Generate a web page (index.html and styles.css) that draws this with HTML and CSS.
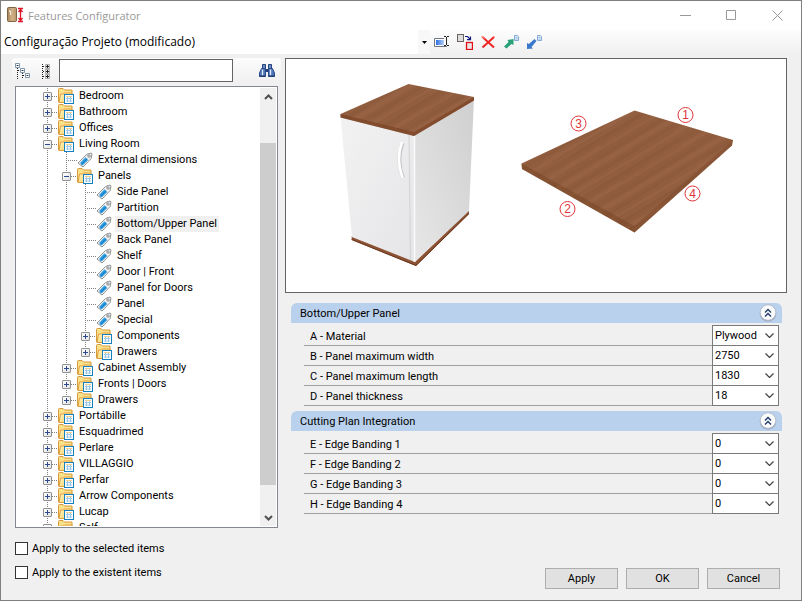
FILE: index.html
```html
<!DOCTYPE html>
<html lang="en">
<head>
<meta charset="utf-8">
<title>Features Configurator</title>
<link rel="stylesheet" href="styles.css">
</head>
<body>
<svg class="defs" aria-hidden="true">
  <defs>
    <linearGradient id="blueFill" x1="0" x2="1"><stop offset="0" stop-color="#2f6fe0"/><stop offset="1" stop-color="#b5d0fa"/></linearGradient>
    <linearGradient id="doorFill" x1="0" x2="1"><stop offset="0" stop-color="#a98258"/><stop offset=".5" stop-color="#d2b48a"/><stop offset="1" stop-color="#b89468"/></linearGradient>
    <linearGradient id="folderFill" x1="0" y1="0" x2="1" y2="1"><stop offset="0" stop-color="#fff3bd"/><stop offset="1" stop-color="#fbd067"/></linearGradient>
    <symbol id="folder" viewBox="0 0 16 16">
      <path d="M.5 14V1.500Q.5.5 1.500.5H5l1.500 1.500h7.500v9H8z" fill="#fbe08c" stroke="#d69a3a"/>
      <path d="M1 14.500l1.500-8.500H5.500l1-1H14V13H7l-1 1.500z" fill="url(#folderFill)" stroke="#dda03e"/>
      <rect x="6.500" y="6.500" width="9" height="9" fill="#fff" stroke="#1480bd"/>
      <path d="M9.500 8v6M12.500 8v6M8 10.500h6M8 13h6" stroke="#9cc6e6" fill="none"/>
      <path d="M8 8.500h6" stroke="#f3cf94"/>
    </symbol>
    <symbol id="tag" viewBox="0 0 16 16">
      <path d="M1 11L9.500 2.500l4.500-1.500 1 .8-.8 4.700L6 15z" fill="#f0f1f2" stroke="#909295" stroke-linejoin="round"/>
      <path d="M3 11L8.500 5.200l2.700 2.800L5.500 13.500z" fill="#2d9be0"/>
      <path d="M4.500 12.500L10 6.800" stroke="#1778b8"/>
      <circle cx="12" cy="4" r="1.200" fill="#fff" stroke="#858585"/>
    </symbol>
    <symbol id="caret" viewBox="0 0 9 5"><path d="M.5.5l4 4 4-4" fill="none" stroke="#444" stroke-width="1.200"/></symbol>
    <symbol id="collapse" viewBox="0 0 18 18">
      <circle cx="9" cy="9.500" r="8.300" fill="#9dabc0"/>
      <circle cx="9" cy="8.500" r="7.800" fill="#fbfbfc" stroke="#b2bccb"/>
      <path d="M6 8.500l3-3 3 3M6 12.500l3-3 3 3" fill="none" stroke="#1f3a66" stroke-width="1.400"/>
    </symbol>
  </defs>
</svg>

<div class="window">
  <header class="titlebar">
    <svg class="app-icon" viewBox="0 0 17 17" aria-hidden="true">
      <rect x=".5" y=".5" width="9" height="14" rx="1" fill="url(#doorFill)" stroke="#806344"/>
      <path d="M3.500 4v4" stroke="#f5efe6"/><path d="M2 3h1v2H2z" fill="#ddd"/>
      <path d="M11 1.500h5M11 14.500h5M13.500 3v10M11.500 5l2-2.500 2 2.500M11.500 11l2 2.500 2-2.500" fill="none" stroke="#dc1428" stroke-width="1.300"/>
    </svg>
    <h1>Features Configurator</h1>
    <div class="window-controls">
      <button aria-label="Minimize"><svg viewBox="0 0 11 11"><path d="M0 5.500h11"/></svg></button>
      <button aria-label="Maximize"><svg viewBox="0 0 11 11"><path d="M.5.5h9v9h-9z"/></svg></button>
      <button aria-label="Close"><svg viewBox="0 0 11 11"><path d="M.5.5l10 10M10.500.5l-10 10"/></svg></button>
    </div>
  </header>

  <div class="toolbar">
    <div class="profile">
      <select aria-label="Configuration"><option>Configuração Projeto (modificado)</option></select>
      <span class="profile-arrow"><svg viewBox="0 0 5 3"><path d="M0 0h5L2.500 3z"/></svg></span>
    </div>
    <div class="actions">
      <button aria-label="Rename"><svg viewBox="0 0 16 16">
        <path d="M10 4.500H.5v8H13" fill="#fff" stroke="#6e7683"/><rect x="2" y="6" width="8" height="5" fill="url(#blueFill)"/>
        <path d="M10 2.500h2M13 2.500h2M12.500 3v8M10 11.500h2M13 11.500h2" fill="none" stroke="#222"/>
      </svg></button>
      <button aria-label="Replace"><svg viewBox="0 0 16 16">
        <rect x=".5" y=".5" width="6" height="7" fill="#ddd" stroke="#6b6262"/><rect x="9.500" y="8.500" width="6" height="7" fill="#ebe6e6" stroke="#e00d14" stroke-width="1.300"/>
        <path d="M8 2.500h2.500L13 5M13.500 2.500v3.200h-3.500" fill="none" stroke="#101c7c" stroke-width="1.200"/>
      </svg></button>
      <button aria-label="Delete"><svg viewBox="0 0 16 16"><path d="M2.500 3L14 13.500M14 3L2.500 13.500" fill="none" stroke="#ef2424" stroke-width="2"/><path d="M1.500 2.500l3 2M14 3l.5-.5" stroke="#f77" stroke-width="1.500"/></svg></button>
      <button aria-label="Export"><svg viewBox="0 0 16 16">
        <path d="M1 12.500l4.500-4.500-1-2L10.500 5v6l-2-1-5 4.500z" fill="#28a078"/>
        <path d="M11.500 1.500h3l1 1v4h-4z" fill="#dcebfa" stroke="#83a9d6"/><path d="M12.500 3.500h2M12.500 5h2" stroke="#8db1dc" stroke-width=".7"/>
      </svg></button>
      <button aria-label="Import"><svg viewBox="0 0 16 16">
        <path d="M1 15V9l1.800 1L8.500 5l2 2-5 6 1.500 1.500z" fill="#3b78cc"/>
        <path d="M11.500 1.500h3l1 1v4h-4z" fill="#dcebfa" stroke="#83a9d6"/><path d="M12.500 3.500h2M12.500 5h2" stroke="#8db1dc" stroke-width=".7"/>
      </svg></button>
    </div>
  </div>

  <main class="content">
    <aside class="sidebar">
      <div class="searchbar">
        <button aria-label="Collapse all"><svg viewBox="0 0 16 16">
          <path d="M2.500 5v11M7.500 10v6M3 7.500h3M8 12.500h3" fill="none" stroke="#222" stroke-dasharray="1 1"/>
          <path d="M.5.500h4v4h-4zM5.500 5.500h4v4h-4zM10.500 10.500h4v4h-4z" fill="#fff" stroke="#8095a8"/>
          <path d="M1.500 2.500h2M6.500 7.500h2M11.500 12.500h2" stroke="#23405c"/>
        </svg></button>
        <button aria-label="Expand all"><svg viewBox="0 0 16 16">
          <path d="M3.500 1v15M4 3.500h2M4 8.500h2M4 13.500h2" fill="none" stroke="#222" stroke-dasharray="1 1"/>
          <path d="M6.500 1.500h4v4h-4zM6.500 6.500h4v4h-4zM6.500 11.500h4v4h-4z" fill="#eee" stroke="#aaa"/>
          <path d="M7 3.500h3M7 8.500h3M7 13.500h3M8.500 2v3M8.500 7v3M8.500 12v3" stroke="#222"/>
        </svg></button>
        <input type="text" aria-label="Search features">
        <button class="find" aria-label="Find"><svg viewBox="0 0 16 16">
          <path d="M3.500 1.500h3v4h-3zM9.500 1.500h3v4h-3z" fill="#6d8fc4" stroke="#24427d"/>
          <path d="M2.500 5.500h4V13.500h-6V10zM9.500 5.500h4l2 4.500v3.500h-6z" fill="#5078b8" stroke="#2c4c8a"/>
          <path d="M6.500 6h3v3h-3z" fill="#24427d"/><path d="M3.500 6.500v6M11.500 6.500v6" stroke="#e1ebfa" stroke-width="1.300"/><path d="M.5 13h6M9.500 13h6" stroke="#18305f"/>
        </svg></button>
      </div>

      <div class="tree-box">
        <div class="tree-view">
          <ul class="tree">
            <li><div class="row"><button class="twist" aria-label="Expand"></button><svg><use href="#folder"/></svg><span>Bedroom</span></div></li>
            <li><div class="row"><button class="twist" aria-label="Expand"></button><svg><use href="#folder"/></svg><span>Bathroom</span></div></li>
            <li><div class="row"><button class="twist" aria-label="Expand"></button><svg><use href="#folder"/></svg><span>Offices</span></div></li>
            <li><div class="row"><button class="twist open" aria-label="Collapse"></button><svg><use href="#folder"/></svg><span>Living Room</span></div>
              <ul>
                <li><div class="row leaf"><svg><use href="#tag"/></svg><span>External dimensions</span></div></li>
                <li><div class="row"><button class="twist open" aria-label="Collapse"></button><svg><use href="#folder"/></svg><span>Panels</span></div>
                  <ul>
                    <li><div class="row leaf"><svg><use href="#tag"/></svg><span>Side Panel</span></div></li>
                    <li><div class="row leaf"><svg><use href="#tag"/></svg><span>Partition</span></div></li>
                    <li><div class="row leaf"><svg><use href="#tag"/></svg><span class="selected">Bottom/Upper Panel</span></div></li>
                    <li><div class="row leaf"><svg><use href="#tag"/></svg><span>Back Panel</span></div></li>
                    <li><div class="row leaf"><svg><use href="#tag"/></svg><span>Shelf</span></div></li>
                    <li><div class="row leaf"><svg><use href="#tag"/></svg><span>Door | Front</span></div></li>
                    <li><div class="row leaf"><svg><use href="#tag"/></svg><span>Panel for Doors</span></div></li>
                    <li><div class="row leaf"><svg><use href="#tag"/></svg><span>Panel</span></div></li>
                    <li><div class="row leaf"><svg><use href="#tag"/></svg><span>Special</span></div></li>
                    <li><div class="row"><button class="twist" aria-label="Expand"></button><svg><use href="#folder"/></svg><span>Components</span></div></li>
                    <li><div class="row"><button class="twist" aria-label="Expand"></button><svg><use href="#folder"/></svg><span>Drawers</span></div></li>
                  </ul>
                </li>
                <li><div class="row"><button class="twist" aria-label="Expand"></button><svg><use href="#folder"/></svg><span>Cabinet Assembly</span></div></li>
                <li><div class="row"><button class="twist" aria-label="Expand"></button><svg><use href="#folder"/></svg><span>Fronts | Doors</span></div></li>
                <li><div class="row"><button class="twist" aria-label="Expand"></button><svg><use href="#folder"/></svg><span>Drawers</span></div></li>
              </ul>
            </li>
            <li><div class="row"><button class="twist" aria-label="Expand"></button><svg><use href="#folder"/></svg><span>Portábille</span></div></li>
            <li><div class="row"><button class="twist" aria-label="Expand"></button><svg><use href="#folder"/></svg><span>Esquadrimed</span></div></li>
            <li><div class="row"><button class="twist" aria-label="Expand"></button><svg><use href="#folder"/></svg><span>Perlare</span></div></li>
            <li><div class="row"><button class="twist" aria-label="Expand"></button><svg><use href="#folder"/></svg><span>VILLAGGIO</span></div></li>
            <li><div class="row"><button class="twist" aria-label="Expand"></button><svg><use href="#folder"/></svg><span>Perfar</span></div></li>
            <li><div class="row"><button class="twist" aria-label="Expand"></button><svg><use href="#folder"/></svg><span>Arrow Components</span></div></li>
            <li><div class="row"><button class="twist" aria-label="Expand"></button><svg><use href="#folder"/></svg><span>Lucap</span></div></li>
            <li><div class="row"><button class="twist" aria-label="Expand"></button><svg><use href="#folder"/></svg><span>Self</span></div></li>
          </ul>
        </div>
        <div class="scrollbar">
          <button aria-label="Scroll up"><svg viewBox="0 0 9 6"><path d="M1 5l3.500-3.500L8 5"/></svg></button>
          <div class="track"><div class="thumb"></div></div>
          <button aria-label="Scroll down"><svg viewBox="0 0 9 6"><path d="M1 1l3.500 3.500L8 1"/></svg></button>
        </div>
      </div>

      <div class="options">
        <label><input type="checkbox"><span>Apply to the selected items</span></label>
        <label><input type="checkbox"><span>Apply to the existent items</span></label>
      </div>
    </aside>

    <section class="details">
      <svg class="preview" viewBox="286 59 500 233" role="img" aria-label="Cabinet with its panel and numbered edges">
        <defs>
          <pattern id="grain" width="130" height="41" patternUnits="userSpaceOnUse" patternTransform="rotate(-31)">
            <rect width="130" height="41" fill="#925e40"/>
            <path d="M0 4h130M0 19h130M0 33h130" stroke="#824f31" stroke-width="4" opacity=".22"/>
            <path d="M0 11h130M0 26h130M0 39h130" stroke="#a57050" stroke-width="4" opacity=".22"/>
            <path d="M0 5.500h80M30 9h90M0 13h60M20 18h100M0 22h86M50 25h70M0 29h100M40 35h90" stroke="#7c4b2e" stroke-width=".7" opacity=".4"/>
          </pattern>
          <linearGradient id="front" x1="0" x2="1" y2="1"><stop offset="0" stop-color="#f2f2f3"/><stop offset="1" stop-color="#e5e5e7"/></linearGradient>
          <linearGradient id="side" x1="0" y1="1" x2="1" y2="0"><stop offset="0" stop-color="#e7e7e8"/><stop offset="1" stop-color="#cfcfd0"/></linearGradient>
        </defs>
        <path d="M351.500 236.500L415.500 261 469 210v4L416 266l-64-26z" fill="#8d5334"/>
        <path d="M351.500 239.500L416 265.500 469 213.500" fill="none" stroke="#683820"/>
        <path d="M340.500 117L415 134v128l-63-25z" fill="url(#front)"/>
        <path d="M414 134l60-36-5 113-54 51z" fill="url(#side)"/>
        <path d="M409 135l1.500 125" stroke="#d2d2d4" fill="none"/><path d="M414.500 136v126" stroke="#fafafa" stroke-width="1.500"/>
        <path d="M408.500 84L474 97v3.500L414 136l-73.500-18.500V114z" fill="url(#grain)"/>
        <path d="M340.500 114l73.500 18 60-35v3.500L414 136l-73.500-18.500z" fill="#6e3519" opacity=".45"/>
        <path d="M402.500 143q-6.500 17 .5 35" fill="none" stroke="#c7c7ca" stroke-width="4"/>
        <path d="M402 142q-6.500 17 .5 36" fill="none" stroke="#fff" stroke-width="2.700"/>
        <path d="M634.500 110.500L733 140l-1 5.500-97.500 87L522 169l-.5-5.500z" fill="url(#grain)"/>
        <path d="M521.500 163.500L634.500 226v6.500L522 169z" fill="#70401f" opacity=".4"/><path d="M634.500 226L733 140l-1 5.500-97.500 87z" fill="#70401f" opacity=".3"/>
        <g class="marks">
          <circle cx="685.500" cy="115" r="7.500"/><text x="685.500" y="119">1</text>
          <circle cx="567.500" cy="209" r="7.500"/><text x="567.500" y="213">2</text>
          <circle cx="578.500" cy="123.500" r="7.500"/><text x="578.500" y="128">3</text>
          <circle cx="692.500" cy="193.500" r="7.500"/><text x="692.500" y="198">4</text>
        </g>
      </svg>

      <div class="groups">
        <section class="group">
          <header><h2>Bottom/Upper Panel</h2><button aria-label="Collapse group"><svg><use href="#collapse"/></svg></button></header>
          <div class="fields">
            <div class="field"><label for="fa">A - Material</label><div class="drop"><select id="fa"><option>Plywood</option></select><svg><use href="#caret"/></svg></div></div>
            <div class="field"><label for="fb">B - Panel maximum width</label><div class="drop"><select id="fb"><option>2750</option></select><svg><use href="#caret"/></svg></div></div>
            <div class="field"><label for="fc">C - Panel maximum length</label><div class="drop"><select id="fc"><option>1830</option></select><svg><use href="#caret"/></svg></div></div>
            <div class="field"><label for="fd">D - Panel thickness</label><div class="drop"><select id="fd"><option>18</option></select><svg><use href="#caret"/></svg></div></div>
          </div>
        </section>
        <section class="group">
          <header><h2>Cutting Plan Integration</h2><button aria-label="Collapse group"><svg><use href="#collapse"/></svg></button></header>
          <div class="fields">
            <div class="field"><label for="fe">E - Edge Banding 1</label><div class="drop"><select id="fe"><option>0</option></select><svg><use href="#caret"/></svg></div></div>
            <div class="field"><label for="ff">F - Edge Banding 2</label><div class="drop"><select id="ff"><option>0</option></select><svg><use href="#caret"/></svg></div></div>
            <div class="field"><label for="fg">G - Edge Banding 3</label><div class="drop"><select id="fg"><option>0</option></select><svg><use href="#caret"/></svg></div></div>
            <div class="field"><label for="fh">H - Edge Banding 4</label><div class="drop"><select id="fh"><option>0</option></select><svg><use href="#caret"/></svg></div></div>
          </div>
        </section>
      </div>

      <footer class="dialog-buttons">
        <button>Apply</button><button>OK</button><button>Cancel</button>
      </footer>
    </section>
  </main>
</div>
</body>
</html>
```
FILE: styles.css
```css
* { box-sizing: border-box; }

body {
  margin: 0;
  background: #f0f0f0;
  color: #000;
  font: 11px/16px Roboto, "Liberation Sans", sans-serif;
}

button, input, select { font: inherit; color: inherit; margin: 0; }
button { padding: 0; border: 0; background: none; }
h1, h2, ul { margin: 0; padding: 0; font: inherit; list-style: none; }
svg { display: block; flex: none; }
.defs { position: absolute; width: 0; height: 0; }

.window {
  display: flex;
  flex-direction: column;
  height: 100vh;
  min-height: 560px;
  border: 1px solid #7f7f7f;
}

/* Title bar */
.titlebar {
  display: flex;
  align-items: center;
  gap: 4px;
  height: 29px;
  padding: 0 18px 0 6px;
  background: #fff;
}
.titlebar h1 { flex: 1; font: 11px/16px "Open Sans", "Noto Sans", sans-serif; color: #999; }
.app-icon { width: 17px; height: 17px; }
.window-controls { display: flex; gap: 35px; }
.window-controls svg { width: 11px; height: 11px; fill: none; stroke: #999; }

/* Toolbar */
.toolbar {
  display: flex;
  flex: none;
  height: 24px;
  background: linear-gradient(#fdfdfd, #f0f0f0);
}
.profile { display: grid; grid-template-columns: 1fr 12px; flex: 0 1 429px; background: #fff; }
.profile select {
  grid-area: 1 / 1 / 2 / 3;
  appearance: none;
  border: 0;
  padding: 0 0 0 3px;
  background: none;
  font: 12px/16px "Open Sans", "Noto Sans", sans-serif;
}
.profile-arrow { grid-area: 1 / 2; display: grid; place-items: center; background: #f8f8f8; pointer-events: none; }
.profile-arrow svg { width: 5px; height: 3px; }
.actions { display: flex; align-items: center; gap: 7px; padding-left: 4px; }
.actions svg { width: 16px; height: 16px; }

/* Two columns */
.content {
  display: grid;
  grid-template-columns: 269px minmax(0, 1fr);
  gap: 4px;
  flex: 1;
  min-height: 0;
  padding: 4px 14px 11px 11px;
}
.sidebar { display: flex; flex-direction: column; min-height: 0; }

.searchbar {
  display: flex;
  align-items: center;
  gap: 8px;
  height: 25px;
  padding: 0 6px 0 3px;
  border-radius: 3px;
  background: linear-gradient(#fcfcfc, #f0f0f0);
}
.searchbar svg { width: 16px; height: 16px; }
.searchbar input { flex: 0 1 174px; min-width: 0; height: 23px; margin-left: -4px; border: 1px solid #646464; background: #fff; padding: 0 3px; }
.searchbar .find { margin-left: auto; }

/* Feature tree */
.tree-box {
  display: flex;
  flex: 1 1 0;
  min-height: 0;
  margin: 3px 3px 0;
  padding: 1px;
  border: 1px solid #828790;
  background: #fff;
}
.tree-view { flex: 1; min-width: 0; overflow: hidden; }
.tree { padding-left: 26px; }
.tree, .tree ul {
  background: repeating-linear-gradient(#808080 0 1px, transparent 1px 2px) no-repeat 4px 0 / 1px calc(100% - 8px);
}
.tree { background-position-x: 30px; }
.tree ul { margin-left: 19px; }
.row { display: flex; align-items: center; height: 16px; white-space: nowrap; }
.row svg { width: 16px; height: 16px; }
.row span { margin-left: 3px; padding: 0 2px; }
.row .selected { background: #f0f0f0; }
.row::before {
  content: "";
  order: 1;
  width: 6px;
  height: 1px;
  background: repeating-linear-gradient(90deg, #808080 0 1px, transparent 1px 2px);
}
.row svg, .row span { order: 2; }
.row.leaf::before { width: 11px; margin-left: 4px; }
.twist {
  width: 9px;
  height: 9px;
  border: 1px solid #919191;
  border-radius: 1px;
  background:
    linear-gradient(#2b4a92, #2b4a92) center / 5px 1px no-repeat,
    linear-gradient(#2b4a92, #2b4a92) center / 1px 5px no-repeat,
    linear-gradient(135deg, #fff, #e2e2e2);
}
.twist.open {
  background:
    linear-gradient(#2b4a92, #2b4a92) center / 5px 1px no-repeat,
    linear-gradient(135deg, #fff, #e2e2e2);
}

.scrollbar { display: flex; flex-direction: column; width: 16px; background: #f0f0f0; }
.scrollbar button { display: grid; place-items: center; height: 17px; }
.scrollbar svg { width: 9px; height: 6px; fill: none; stroke: #505050; stroke-width: 2; }
.track { display: flex; flex-direction: column; justify-content: flex-end; flex: 1; padding-bottom: 24px; }
.thumb { height: 90%; background: #cdcdcd; }

.options { display: flex; flex-direction: column; gap: 8px; padding: 12px 3px 9px; }
.options label { display: flex; align-items: center; gap: 4px; height: 16px; }
.options span { padding-top: 1px; }
.options input { appearance: none; width: 13px; height: 13px; border: 1px solid #333; background: #fff; }

/* Details column */
.details { display: flex; flex-direction: column; min-height: 0; }
.preview { width: 100%; height: auto; border: 1px solid #646464; background: #fff; }
.marks circle { fill: none; stroke: #e0343a; }
.marks text { fill: #e0343a; font: 12px "Liberation Sans", sans-serif; text-anchor: middle; }

.groups { display: flex; flex-direction: column; gap: 5px; padding: 10px 5px 0 6px; }
.group header {
  display: flex;
  align-items: center;
  justify-content: space-between;
  height: 20px;
  padding: 0 5px 0 9px;
  border-radius: 6px 6px 0 0;
  background: #b9d1ec;
}
.group h2 { padding-top: 1px; }
.group header svg { width: 18px; height: 18px; }
.fields { padding: 3px 3px 0 13px; }
.field { display: flex; height: 20px; }
.field label { flex: 1; padding: 3px 0 0 6px; border-bottom: 1px solid #a0a0a0; }
.drop { display: grid; grid-template-columns: 1fr 17px; align-items: center; width: 67px; height: 21px; margin-top: -1px; border: 1px solid #7a7a7a; background: #fff; }
.drop select { grid-area: 1 / 1 / 2 / 3; appearance: none; border: 0; padding: 0 0 0 2px; background: none; }
.drop svg { grid-area: 1 / 2; width: 9px; height: 5px; margin-left: 4px; pointer-events: none; }

.dialog-buttons { display: flex; justify-content: flex-end; gap: 8px; margin-top: auto; padding-right: 7px; }
.dialog-buttons button { width: 73px; height: 21px; border: 1px solid #adadad; background: #e1e1e1; }
```
